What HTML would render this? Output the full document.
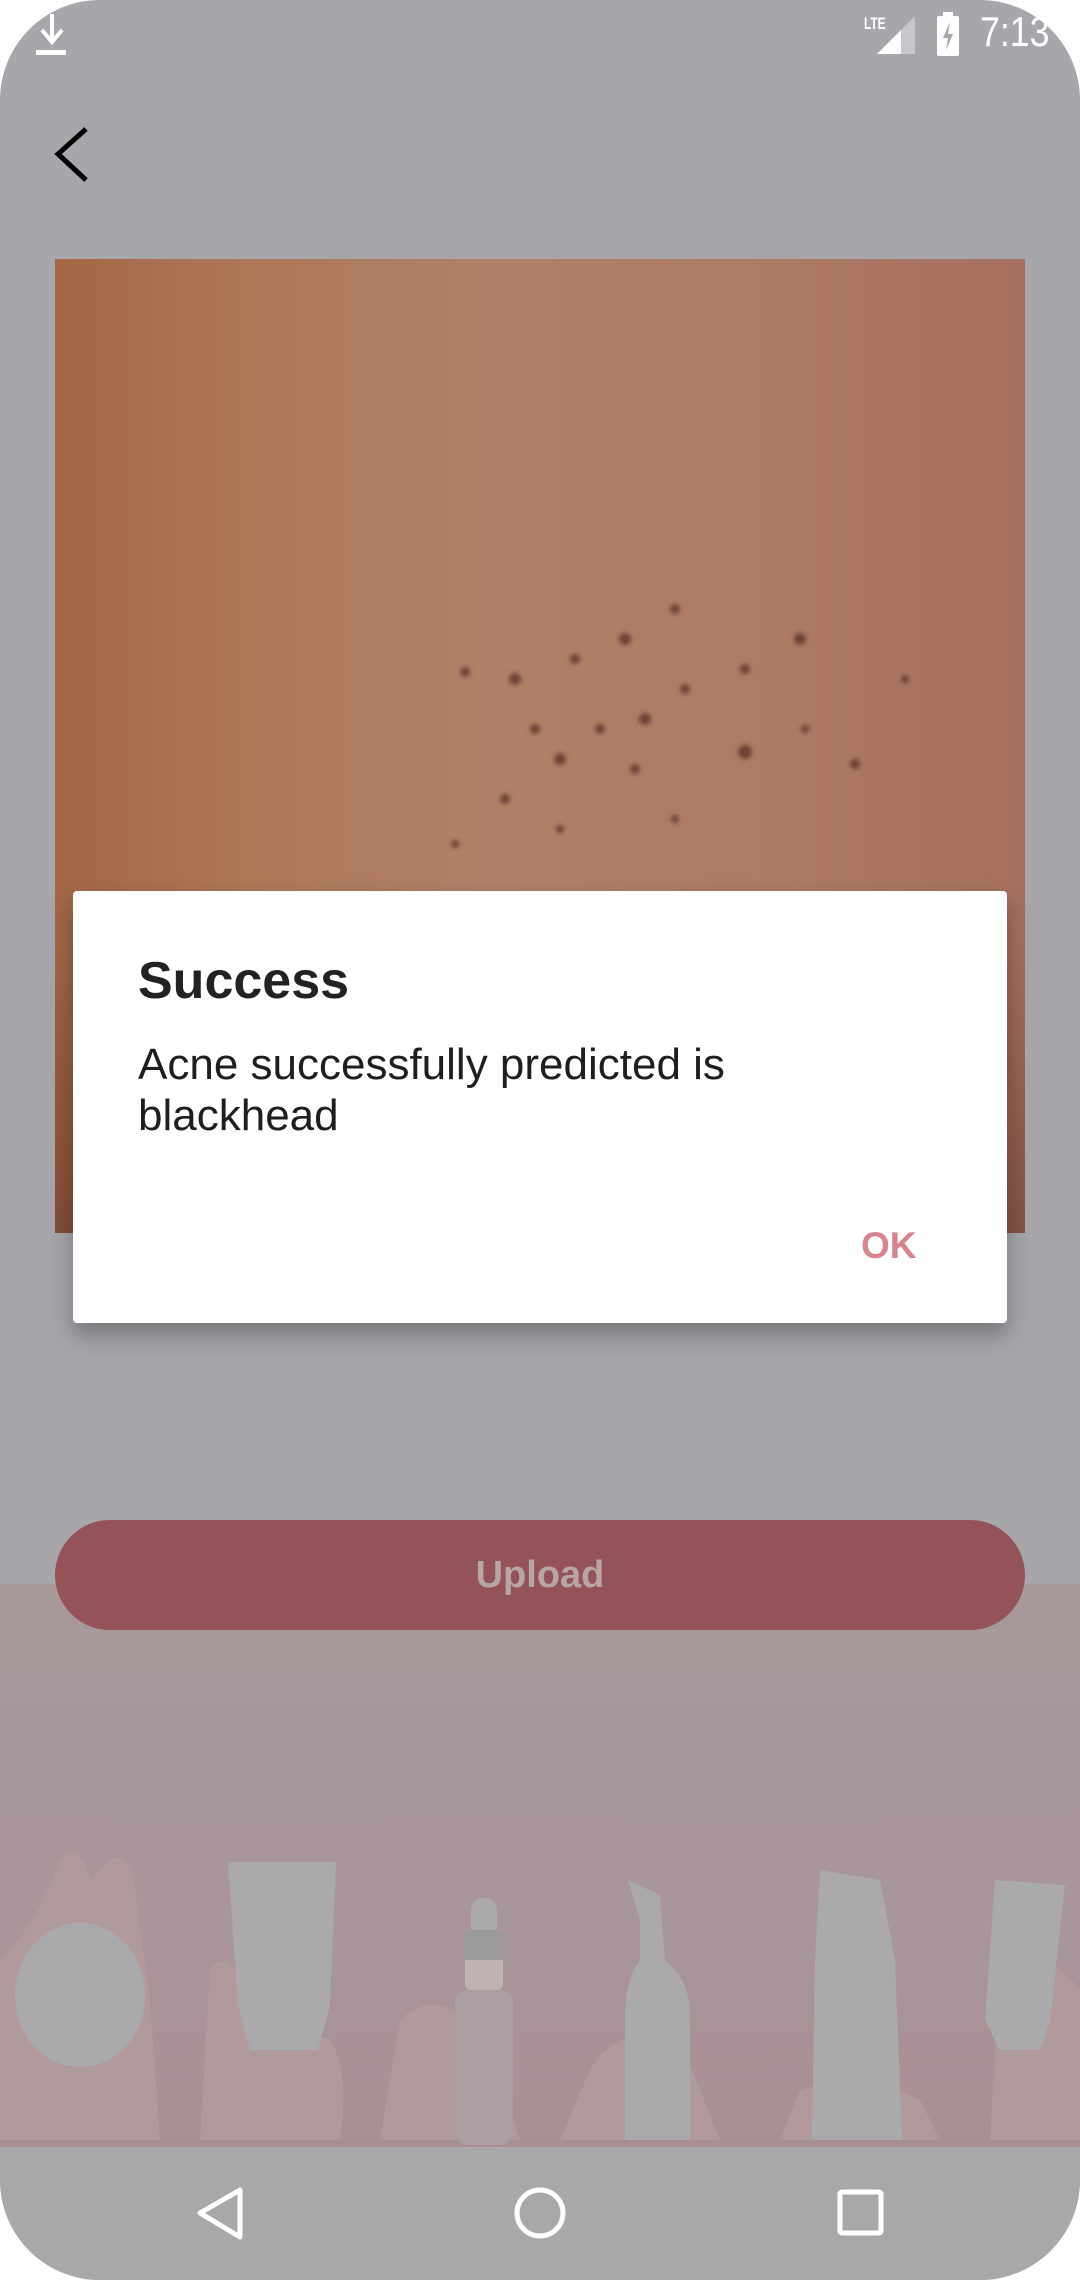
<!DOCTYPE html>
<html><head><meta charset="utf-8"><style>
*{margin:0;padding:0;box-sizing:border-box}
html,body{width:1080px;height:2280px;background:#fff;overflow:hidden;font-family:"Liberation Sans",sans-serif}
#scr{position:absolute;left:0;top:0;width:1080px;height:2280px;border-radius:100px;overflow:hidden;background:#a7a6ab}
.abs{position:absolute}
</style></head><body>
<div id="scr">
 <div class="abs" style="left:0;top:1584px;width:1080px;height:563px;background:linear-gradient(#a7989a,#a8969a 60%,#a98f94)"></div>
 <svg class="abs" style="left:0;top:1840px" width="1080" height="307">
  <g fill="#b19a9c">
   <path d="M0 300 L0 120 Q40 80 60 20 Q80 0 90 40 L110 20 Q130 10 135 50 L150 160 L160 300Z"/>
   <path d="M200 300 L210 130 Q230 100 260 170 L330 200 Q350 230 340 300Z"/>
   <path d="M380 300 L400 180 Q430 150 470 180 L500 240 L520 300Z"/>
   <path d="M560 300 L590 230 Q620 180 680 200 L720 300Z"/>
   <path d="M780 300 L800 250 Q860 230 920 260 L940 300Z"/>
   <path d="M990 300 L1000 130 Q1040 100 1080 150 L1080 300Z"/>
  </g>
  <g fill="#aaaaac">
   <ellipse cx="80" cy="155" rx="65" ry="72"/>
   <path d="M228 22 L336 22 L330 165 L318 210 L250 210 L238 165Z"/>
   <rect x="465" y="90" width="38" height="60" rx="6" fill="#c2b3b3"/>
   <rect x="471" y="58" width="26" height="40" rx="12"/>
   <rect x="465" y="90" width="38" height="30" fill="#9a9a9c"/>
   <rect x="455" y="150" width="58" height="155" rx="12" fill="#ad9fa1"/>
   <path d="M628 40 L660 55 L665 120 Q690 140 690 175 L690 300 L625 300 L625 175 Q625 140 640 120 L640 80Z"/>
   <path d="M820 30 L880 40 L895 120 L902 300 L812 300 L815 120 Z"/>
   <path d="M995 40 L1065 45 L1050 180 L1040 210 L1000 210 L985 180Z"/>
  </g>
 </svg>
 <svg class="abs" style="left:50px;top:125px" width="40" height="60"><path d="M36 4 L8 29 L36 55" fill="none" stroke="#000" stroke-width="5"/></svg>
 <svg class="abs" style="left:34px;top:12px" width="36" height="45"><path d="M18 2 V28 M8 18 L18 30 L28 18" stroke="#fff" stroke-width="4" fill="none"/><rect x="2" y="38" width="30" height="5" fill="#fff"/></svg>
 <div class="abs" style="left:864px;top:14px;font-size:17px;font-weight:bold;color:#fff;transform:scaleX(.7);transform-origin:left">LTE</div>
 <svg class="abs" style="left:875px;top:14px" width="42" height="42"><path d="M40 2 V40 H2Z" fill="#c8c8cc"/><path d="M26 16 V40 H2Z" fill="#fff"/></svg>
 <svg class="abs" style="left:935px;top:12px" width="28" height="44"><rect x="8" y="0" width="10" height="5" fill="#fff"/><rect x="2" y="4" width="22" height="40" rx="2" fill="#fff"/><path d="M15 10 L8 26 H13 L11 38 L18 22 H13Z" fill="#a7a6ab"/></svg>
 <div class="abs" style="left:980px;top:8px;font-size:42px;color:#fff;transform:scaleX(.85);transform-origin:left">7:13</div>
 <div class="abs" style="left:55px;top:259px;width:970px;height:974px;background:linear-gradient(90deg,#a26747 0%,#ad7858 20%,#b08068 45%,#ad7a66 75%,#a5705e 100%)">
  <div class="abs" style="left:0;top:0;width:970px;height:974px;background:linear-gradient(180deg,rgba(0,0,0,0) 0%,rgba(0,0,0,0) 70%,rgba(70,30,20,.35) 100%)"></div>
  <svg class="abs" style="left:0;top:0;filter:blur(2px)" width="970" height="974"><g fill="#5a3028" opacity=".75">
   <circle cx="410" cy="413" r="5"/><circle cx="460" cy="420" r="6"/><circle cx="520" cy="400" r="5"/><circle cx="570" cy="380" r="6"/><circle cx="620" cy="350" r="5"/><circle cx="745" cy="380" r="6"/><circle cx="690" cy="410" r="5"/><circle cx="505" cy="500" r="6"/><circle cx="545" cy="470" r="5"/><circle cx="590" cy="460" r="6"/><circle cx="630" cy="430" r="5"/><circle cx="690" cy="493" r="7"/><circle cx="580" cy="510" r="5"/><circle cx="450" cy="540" r="5"/><circle cx="400" cy="585" r="4"/><circle cx="505" cy="570" r="4"/><circle cx="800" cy="505" r="5"/><circle cx="850" cy="420" r="4"/><circle cx="620" cy="560" r="4"/><circle cx="750" cy="470" r="4"/><circle cx="480" cy="470" r="5"/>
  </g></svg>
 </div>
 <div class="abs" style="left:73px;top:891px;width:934px;height:432px;background:#fff;border-radius:4px;box-shadow:0 12px 24px rgba(0,0,0,.3)">
  <div class="abs" style="left:65px;top:60px;font-size:52px;font-weight:bold;color:#222">Success</div>
  <div class="abs" style="left:65px;top:148px;font-size:44px;line-height:51px;color:#1e1e1e">Acne successfully predicted is<br>blackhead</div>
  <div class="abs" style="left:788px;top:334px;font-size:37px;font-weight:bold;color:#d9838c">OK</div>
 </div>
 <div class="abs" style="left:55px;top:1520px;width:970px;height:110px;border-radius:55px;background:#935359;color:#b8a5a6;font-size:38px;font-weight:bold;text-align:center;line-height:110px">Upload</div>
 <div class="abs" style="left:0;top:2147px;width:1080px;height:133px;background:#a8a8aa"></div>
 <svg class="abs" style="left:0;top:2147px" width="1080" height="133">
  <path d="M240 43 L200 66 L240 90Z" fill="none" stroke="#fff" stroke-width="5" stroke-linejoin="round"/>
  <circle cx="540" cy="66" r="23" fill="none" stroke="#fff" stroke-width="5"/>
  <rect x="840" y="45" width="41" height="41" rx="2" fill="none" stroke="#fff" stroke-width="5"/>
 </svg>
</div>
</body></html>
